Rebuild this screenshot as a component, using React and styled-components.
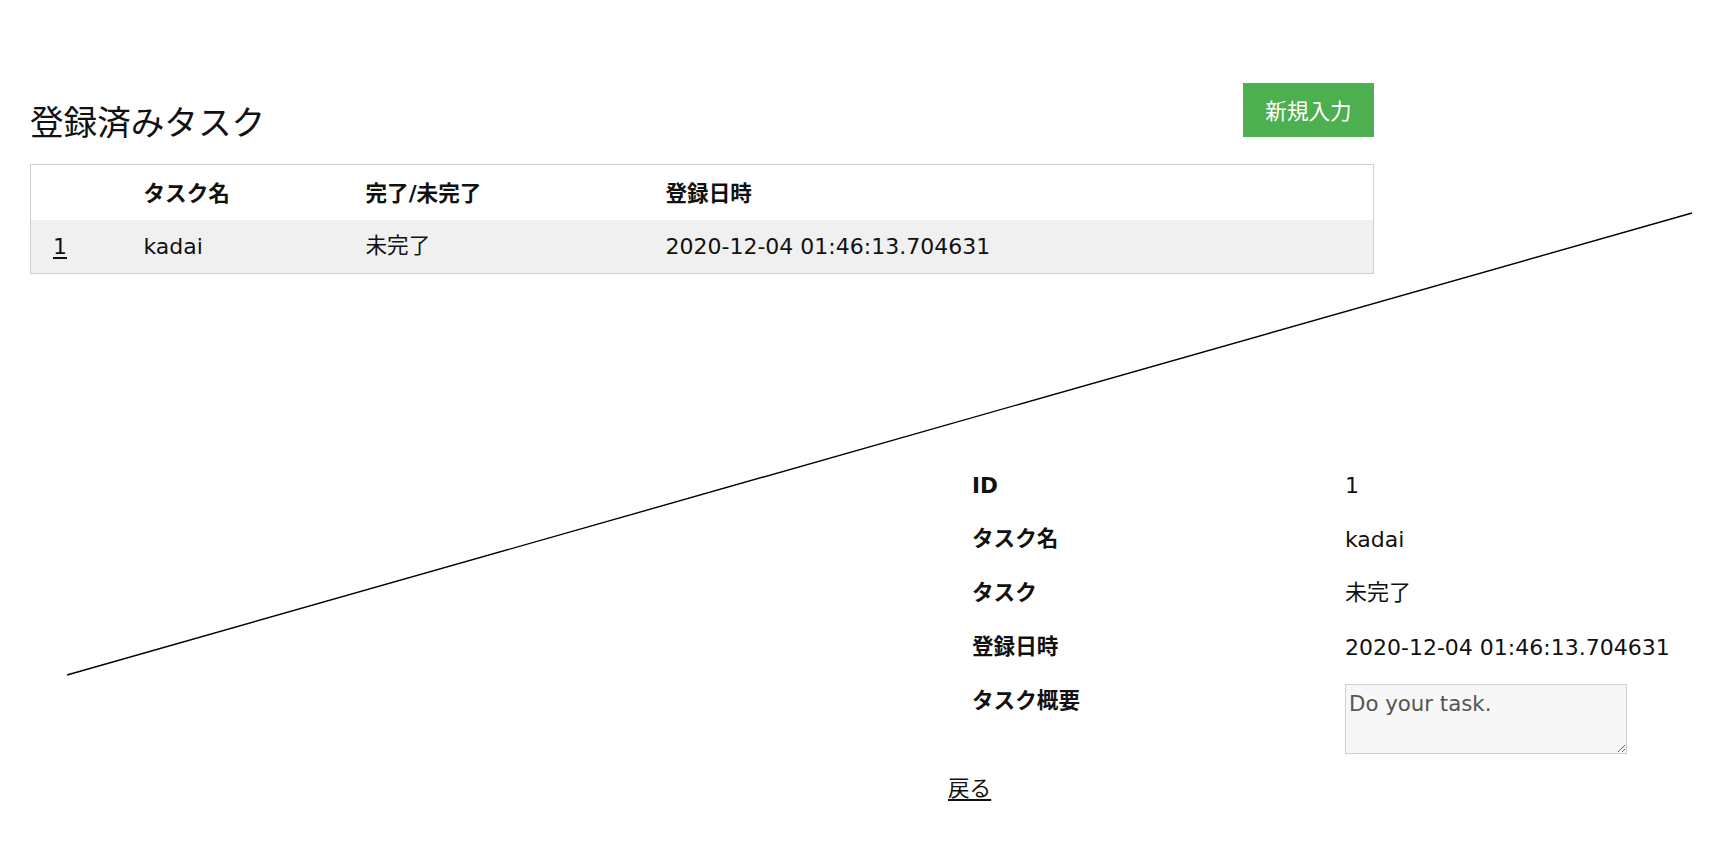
import React from "react";
import styled, { createGlobalStyle } from "styled-components";

const GlobalStyle = createGlobalStyle`
  html, body {
    margin: 0;
    padding: 0;
    background: #ffffff;
  }
  body {
    font-family: "DejaVu Sans", "Noto Sans CJK JP", sans-serif;
    font-size: 22px;
    color: #111111;
  }
  * { box-sizing: border-box; }
`;

const Page = styled.div`
  position: relative;
  width: 1724px;
  min-height: 854px;
  padding: 83px 0 0 30px;
`;

const Header = styled.div`
  width: 1344px;
  display: flex;
  justify-content: space-between;
  align-items: flex-end;
  margin-bottom: 27px;
`;

const Title = styled.h2`
  margin: 0 0 -4px 0;
  font-size: 33.6px;
  font-weight: normal;
  line-height: 1;
  color: #111111;
`;

const NewButton = styled.button`
  width: 131px;
  height: 54px;
  border: none;
  background: #4caf50;
  color: #ffffff;
  font-family: inherit;
  font-size: 21.6px;
  padding: 0 0 2px 0;
  cursor: pointer;
`;

const TaskTable = styled.table`
  width: 1344px;
  border-collapse: collapse;
  border: 1px solid #cfcfcf;
  table-layout: fixed;
  font-size: 22px;
`;

const HeadCell = styled.th`
  text-align: left;
  font-weight: bold;
  font-size: 21.6px;
  height: 55px;
  padding: 0 0 2px 22px;
  width: ${(p) => (p.$w ? `${p.$w}px` : "auto")};
`;

const Row = styled.tr`
  background: ${(p) => (p.$shade ? "#f0f0f0" : "#ffffff")};
`;

const Cell = styled.td`
  height: 54px;
  padding: 0 0 ${(p) => (p.$cjk ? "6px" : "0")} 22px;
  white-space: nowrap;
  font-size: ${(p) => (p.$cjk ? "21.6px" : "22px")};
`;

const PlainLink = styled.a`
  color: #111111;
  text-decoration: underline;
  text-underline-offset: 3px;
`;

const Detail = styled.section`
  margin: 184px 0 0 918px;
`;

const DetailGrid = styled.div`
  display: grid;
  grid-template-columns: 373px auto;
  padding-left: 24px;
`;

const Label = styled.div`
  font-weight: bold;
  font-size: 21.6px;
  height: ${(p) => (p.$top ? "auto" : "54px")};
  display: flex;
  align-items: ${(p) => (p.$top ? "flex-start" : "center")};
  padding-top: ${(p) => (p.$top ? "9px" : "0")};
  padding-bottom: ${(p) => (p.$top ? "0" : p.$cjk ? "6px" : "0")};
`;

const Value = styled.div`
  height: ${(p) => (p.$top ? "auto" : "54px")};
  display: flex;
  align-items: ${(p) => (p.$top ? "flex-start" : "center")};
  padding: ${(p) => (p.$top ? "10px 0 9px 0" : p.$cjk ? "0 0 6px 0" : "0")};
`;

const Summary = styled.textarea`
  width: 282px;
  height: 70px;
  border: 1px solid #d0d0d0;
  background: #f7f7f7;
  color: #555555;
  font-family: "DejaVu Sans", "Noto Sans CJK JP", sans-serif;
  font-size: 21.3px;
  padding: 6px 3px;
  margin: 0;
  display: block;
`;

const BackLink = styled(PlainLink)`
  display: inline-block;
  margin-top: 13px;
  line-height: 26px;
  font-size: 21.6px;
`;

const Overlay = styled.svg`
  position: absolute;
  top: 0;
  left: 0;
  pointer-events: none;
`;

const rows = [
  { label: "ID", value: "1", lcjk: false, vcjk: false },
  { label: "タスク名", value: "kadai", lcjk: true, vcjk: false },
  { label: "タスク", value: "未完了", lcjk: true, vcjk: true },
  { label: "登録日時", value: "2020-12-04 01:46:13.704631", lcjk: true, vcjk: false },
];

export default function App() {
  return (
    <Page>
      <GlobalStyle />
      <Header>
        <Title>登録済みタスク</Title>
        <NewButton>新規入力</NewButton>
      </Header>
      <TaskTable>
        <thead>
          <tr>
            <HeadCell $w={91}></HeadCell>
            <HeadCell $w={222}>タスク名</HeadCell>
            <HeadCell $w={300}>完了/未完了</HeadCell>
            <HeadCell>登録日時</HeadCell>
          </tr>
        </thead>
        <tbody>
          <Row $shade>
            <Cell>
              <PlainLink href="#">1</PlainLink>
            </Cell>
            <Cell>kadai</Cell>
            <Cell $cjk>未完了</Cell>
            <Cell>2020-12-04 01:46:13.704631</Cell>
          </Row>
        </tbody>
      </TaskTable>
      <Detail>
        <DetailGrid>
          {rows.map((r) => (
            <React.Fragment key={r.label}>
              <Label $cjk={r.lcjk}>{r.label}</Label>
              <Value $cjk={r.vcjk}>{r.value}</Value>
            </React.Fragment>
          ))}
          <Label $top>タスク概要</Label>
          <Value $top>
            <Summary defaultValue="Do your task." />
          </Value>
        </DetailGrid>
        <BackLink href="#">戻る</BackLink>
      </Detail>
      <Overlay width="1724" height="854" viewBox="0 0 1724 854">
        <line x1="67" y1="675" x2="1692" y2="213" stroke="#000" strokeWidth="1.4" />
      </Overlay>
    </Page>
  );
}
